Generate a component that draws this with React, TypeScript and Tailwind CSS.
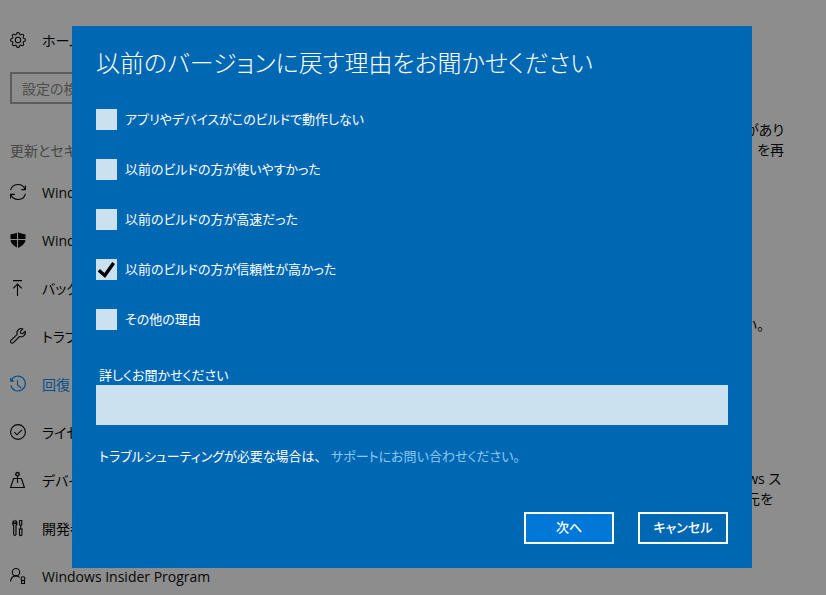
import { useState } from "react";
import type { ReactNode } from "react";
import { BsGear } from "react-icons/bs";

function Icon({ children }: { children: ReactNode }) {
  return (
    <svg
      viewBox="0 0 16 16"
      className="size-4 shrink-0 overflow-visible"
      fill="none"
      stroke="currentColor"
      strokeWidth="1.1"
      aria-hidden="true"
    >
      {children}
    </svg>
  );
}

const SyncIcon = () => (
  <Icon>
    <path d="M.6 6.2A7.6 7.6 0 0 1 15 5.2M15.4 9.8A7.6 7.6 0 0 1 1 10.8" />
    <path d="M15.4 1.4v4.2h-4.2M.6 14.6v-4.2h4.2" />
  </Icon>
);

const ShieldIcon = () => (
  <Icon>
    <path
      d="M8 0c2 1.4 4.600 2.200 7.500 2.200V7c0 4.200-3.200 7-7.500 9C3.700 14 .5 11.200 .5 7V2.200C3.400 2.200 6 1.400 8 0Z"
      fill="currentColor"
      stroke="none"
    />
    <path d="M7.500 0v16M0 7.500h16" stroke="#8d8d8d" />
  </Icon>
);

const BackupIcon = () => (
  <Icon>
    <path d="M3 .6h9M7.500 16V4M3.200 8.300 7.500 4l4.300 4.300" />
  </Icon>
);

const WrenchIcon = () => (
  <Icon>
    <path
      d="M12.900 .9A4.300 4.300 0 0 0 7.200 6.300L.9 12.400a1.700 1.700 0 0 0 0 2.300 1.700 1.700 0 0 0 2.500 0l6.200-6.200A4.300 4.300 0 0 0 15.200 3.200L12.600 5.600l-1.900-.4-.3-1.900Z"
      strokeLinejoin="round"
    />
  </Icon>
);

const HistoryIcon = () => (
  <Icon>
    <path d="M1.200 4.500A7.400 7.400 0 1 1 .8 9.500M7.500 4v5l3.700 3" />
    <path d="M.2 1.500v4.300h4.300Z" fill="currentColor" stroke="none" />
  </Icon>
);

const CheckCircleIcon = () => (
  <Icon>
    <circle cx="8" cy="8" r="7.400" />
    <path d="m4.300 8.200 2.600 2.600 5-5" />
  </Icon>
);

const LocateIcon = () => (
  <Icon>
    <circle cx="7.500" cy="2.200" r="1.700" strokeWidth="1.400" />
    <path d="M7.500 3.900v7.100M3.500 6.500h8l2.900 9H.6Z" />
  </Icon>
);

const ToolsIcon = () => (
  <Icon>
    <path d="M3.900 .8v3h1.900v-3C7.400 1.800 7.400 4.600 6 5.700V14c0 1.900-2.300 1.900-2.300 0V5.700C2.300 4.600 2.300 1.800 3.900 .8Z" />
    <path d="M9.600 .5h2.200v4L10.700 6 9.600 4.500ZM10.700 6v3M9.500 9h2.400v5.600c0 1.300-2.400 1.300-2.400 0ZM8.600 9h4.200" />
  </Icon>
);

const InsiderIcon = () => (
  <Icon>
    <circle cx="6" cy="4.200" r="3.700" />
    <path d="M.5 13.500C1 10 3 7.900 6 7.900c1.500 0 2.700.5 3.600 1.400" />
    <circle cx="13" cy="10.700" r="1.900" />
    <path d="M11.500 12.300v3.200h3v-3.200" />
  </Icon>
);

const NAV_ITEMS = [
  { label: "Windows Update", icon: <SyncIcon /> },
  { label: "Windows Defender", icon: <ShieldIcon /> },
  { label: "バックアップ", icon: <BackupIcon /> },
  { label: "トラブルシューティング", icon: <WrenchIcon /> },
  { label: "回復", icon: <HistoryIcon />, active: true },
  { label: "ライセンス認証", icon: <CheckCircleIcon /> },
  { label: "デバイスの検索", icon: <LocateIcon /> },
  { label: "開発者向け", icon: <ToolsIcon /> },
  { label: "Windows Insider Program", icon: <InsiderIcon /> },
];

function Sidebar() {
  return (
    <nav className="w-60 shrink-0 pt-4 pl-[10px]">
      <a href="#home" className="flex h-12 items-center gap-4">
        <BsGear className="size-4 shrink-0" aria-hidden="true" />
        ホーム
      </a>
      <input
        type="search"
        aria-label="設定の検索"
        placeholder="設定の検索"
        className="mt-2 block h-8 w-full border-2 border-[#5c5c5c] bg-transparent px-[10px] placeholder:text-[#4c4c4c]"
      />
      <h2 className="mt-[35px] h-6 leading-6 text-[#464646]">更新とセキュリティ</h2>
      <ul className="mt-[5px]">
        {NAV_ITEMS.map((item) => (
          <li key={item.label}>
            <a
              href="#section"
              className={`flex h-12 items-center gap-4 ${item.active ? "text-[#06508a]" : ""}`}
            >
              {item.icon}
              {item.label}
            </a>
          </li>
        ))}
      </ul>
    </nav>
  );
}

function Content() {
  return (
    <main className="flex-1 pt-[120px] pr-[42px] text-right leading-5">
      <p>
        場合があり
        <br />
        を再
      </p>
      <p className="mt-[155px] pr-5">ください。</p>
      <p className="mt-[134px] pr-[3px]">
        Windows ス
        <br />
        <span className="pr-2">元を</span>
      </p>
    </main>
  );
}

const REASONS = [
  "アプリやデバイスがこのビルドで動作しない",
  "以前のビルドの方が使いやすかった",
  "以前のビルドの方が高速だった",
  "以前のビルドの方が信頼性が高かった",
  "その他の理由",
];

function Reason({ label, initial }: { label: string; initial: boolean }) {
  const [checked, setChecked] = useState(initial);
  return (
    <label className="flex h-[21px] items-center gap-2">
      <span className="grid size-[21px] shrink-0">
        <input
          type="checkbox"
          checked={checked}
          onChange={() => setChecked(!checked)}
          className="col-start-1 row-start-1 size-[21px] appearance-none bg-[#cce1f0]"
        />
        {checked && (
          <svg
            viewBox="0 0 21 21"
            className="pointer-events-none col-start-1 row-start-1 size-[21px]"
            fill="none"
            stroke="#000"
            strokeWidth="3.400"
            aria-hidden="true"
          >
            <path d="m2.800 11.200 6 5.300L17.600 4" />
          </svg>
        )}
      </span>
      {label}
    </label>
  );
}

function FeedbackDialog() {
  return (
    <form
      role="dialog"
      aria-labelledby="dialog-title"
      className="w-full bg-[#0068b3] px-6 pt-[17px] pb-6 text-[13px] text-white"
      onSubmit={(e) => e.preventDefault()}
    >
      <h1 id="dialog-title" className="text-[24px] leading-10 font-light">
        以前のバージョンに戻す理由をお聞かせください
      </h1>
      <div className="mt-[26px] flex flex-col gap-[29px]">
        {REASONS.map((reason, i) => (
          <Reason key={reason} label={reason} initial={i === 3} />
        ))}
      </div>
      <label htmlFor="details" className="mt-[35px] block pl-[3px] leading-5">
        詳しくお聞かせください
      </label>
      <input id="details" type="text" className="block h-10 w-full bg-[#cce1f0] px-2 text-black" />
      <p className="mt-[21px] flex gap-[10px] pl-[3px] leading-5">
        トラブルシューティングが必要な場合は、
        <a href="#support" className="text-[#8cc8f2]">
          サポートにお問い合わせください。
        </a>
      </p>
      <div className="mt-[46px] flex justify-end gap-6 font-medium">
        <button type="submit" className="h-8 w-[90px] border-2 border-white bg-[#0078d7]">
          次へ
        </button>
        <button type="button" className="h-8 w-[90px] border-2 border-white">
          キャンセル
        </button>
      </div>
    </form>
  );
}

export default function App() {
  return (
    <div
      lang="ja"
      className="relative h-screen overflow-hidden bg-[#8d8d8d] font-['Open_Sans','Noto_Sans_CJK_JP',sans-serif] text-[14px] text-[#050505] [font-feature-settings:'palt']"
    >
      <div className="flex">
        <Sidebar />
        <Content />
      </div>
      <div className="absolute inset-0 pt-[26px] pr-[74px] pl-[72px]">
        <FeedbackDialog />
      </div>
    </div>
  );
}
